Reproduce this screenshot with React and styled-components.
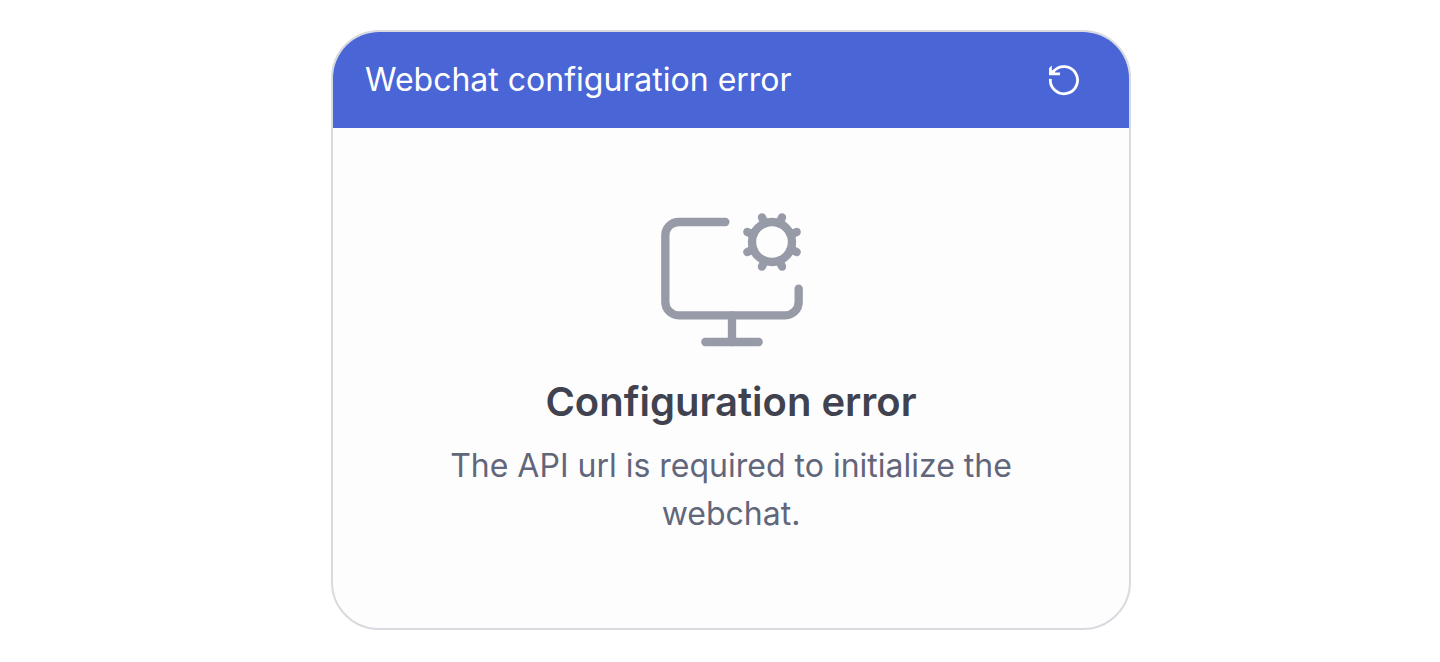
import React from "react";
import styled, { createGlobalStyle } from "styled-components";

const GlobalStyle = createGlobalStyle`
  *, *::before, *::after { box-sizing: border-box; }
  body {
    margin: 0;
    background: #ffffff;
    font-family: Inter, "Liberation Sans", sans-serif;
    -webkit-font-smoothing: antialiased;
  }
`;

const Page = styled.main`
  display: flex;
  justify-content: center;
  padding: 30px 16px 32px 38px;
`;

const Card = styled.section`
  display: flex;
  flex-direction: column;
  width: 100%;
  max-width: 800px;
  overflow: hidden;
  border: 2px solid #d9d9e0;
  border-radius: 48px;
  background: #fdfdfd;
`;

const Header = styled.header`
  display: flex;
  align-items: center;
  justify-content: space-between;
  padding: 24px 48px 24px 32px;
  background: #4a65d6;
  color: #ffffff;
`;

const Title = styled.h1`
  margin: 0;
  font-size: 32px;
  line-height: 48px;
  font-weight: 400;
`;

const IconButton = styled.button`
  display: flex;
  padding: 0;
  border: 0;
  background: none;
  color: inherit;
  cursor: pointer;
`;

const Body = styled.div`
  display: flex;
  flex-direction: column;
  align-items: center;
  padding: 74px 96px 90px;
  text-align: center;
`;

const Illustration = styled.svg`
  display: block;
  width: 162px;
  height: 160px;
  color: #979ba8;
`;

const Heading = styled.h2`
  margin: 12px 0 0;
  font-size: 40px;
  line-height: 56px;
  font-weight: 600;
  color: #40434f;
`;

const Message = styled.p`
  margin: 12px 0 0;
  font-size: 32px;
  line-height: 48px;
  color: #62667a;
`;

function RestartIcon() {
  return (
    <svg width="32" height="32" viewBox="0 0 32 32" fill="none" stroke="currentColor" strokeWidth="2.8" aria-hidden="true">
      <path d="M1.4 14.8A13.6 13.6 0 1 0 4.7 7.2L1.6 10" />
      <path d="M0 11.2V4.2L2.8 1.6V6.6L6 5.2L6 8.4H11V11.2Z" fill="currentColor" stroke="none" />
    </svg>
  );
}

function MonitorCog() {
  return (
    <Illustration
      viewBox="0 0 24 24"
      preserveAspectRatio="xMaxYMid meet"
      fill="none"
      stroke="currentColor"
      strokeWidth="1.25"
      strokeLinecap="round"
      strokeLinejoin="round"
      aria-hidden="true"
    >
      <path d="M12 17v4" />
      <path d="m15.2 4.9-.9-.4" />
      <path d="m15.2 7.1-.9.4" />
      <path d="m16.9 3.2-.4-.9" />
      <path d="m16.9 8.8-.4.9" />
      <path d="m19.5 2.3-.4.9" />
      <path d="m19.5 9.7-.4-.9" />
      <path d="m21.7 4.5-.9.4" />
      <path d="m21.7 7.5-.9-.4" />
      <path d="M22 13v2a2 2 0 0 1-2 2H4a2 2 0 0 1-2-2V5a2 2 0 0 1 2-2h7" />
      <path d="M8 21h8" />
      <circle cx="18" cy="6" r="3" />
    </Illustration>
  );
}

export default function App() {
  return (
    <>
      <GlobalStyle />
      <Page>
        <Card>
          <Header>
            <Title>Webchat configuration error</Title>
            <IconButton type="button" aria-label="Restart conversation">
              <RestartIcon />
            </IconButton>
          </Header>
          <Body>
            <MonitorCog />
            <Heading>Configuration error</Heading>
            <Message>The API url is required to initialize the webchat.</Message>
          </Body>
        </Card>
      </Page>
    </>
  );
}
